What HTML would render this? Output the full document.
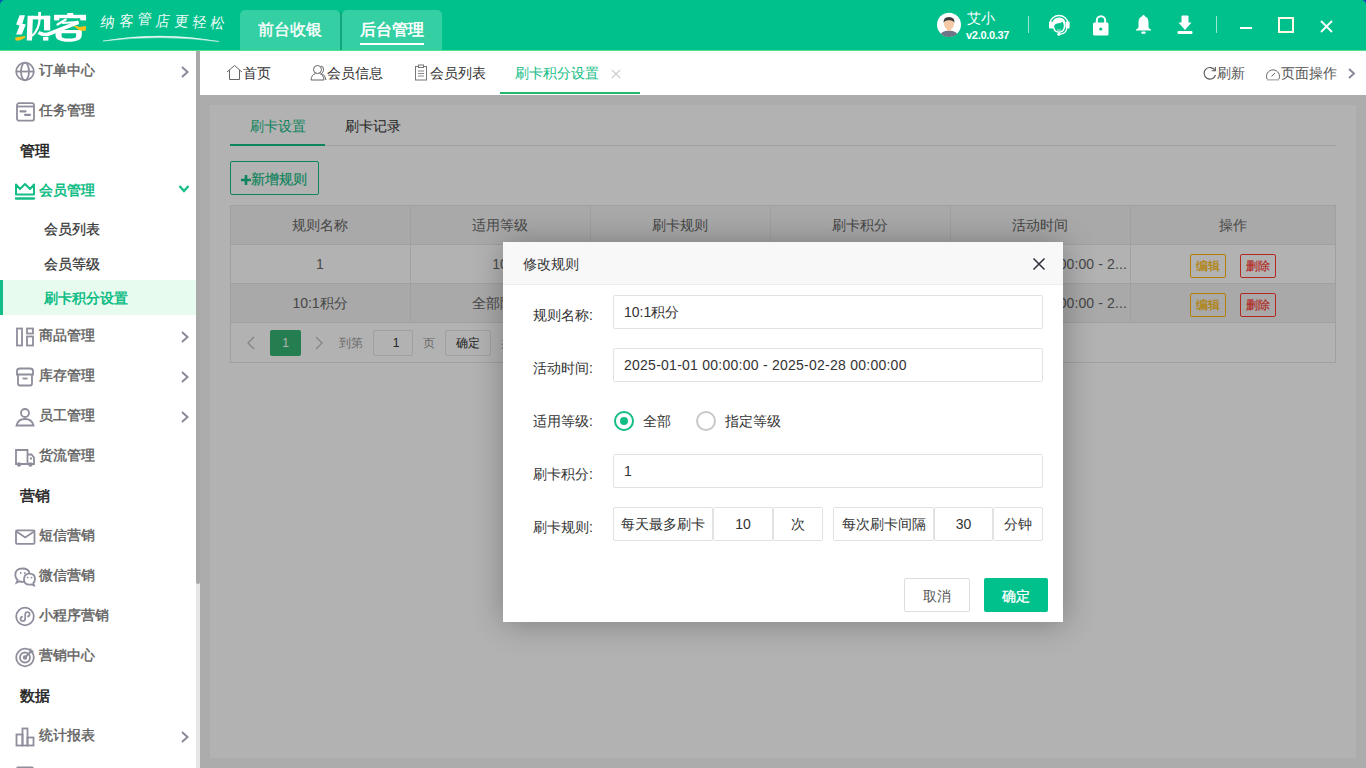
<!DOCTYPE html>
<html><head><meta charset="utf-8">
<style>
*{box-sizing:border-box;margin:0;padding:0}
html,body{width:1366px;height:768px;overflow:hidden;background:#fff;font-family:"Liberation Sans",sans-serif;font-size:14px;color:#333}
.abs{position:absolute}
#hdr{position:absolute;left:0;top:0;width:1366px;height:51px;background:#00c18c;border-radius:5px 5px 0 0;border-bottom:1px solid #4fe08a}
.htab{position:absolute;top:10px;height:40px;background:#34d0a3;border-radius:5px 5px 0 0;color:#fff;font-size:16px;line-height:40px;text-align:center}
#side{position:absolute;left:0;top:51px;width:196px;height:717px;background:#fff}
.si{position:absolute;left:0;width:196px;height:40px;line-height:20px}
.si .ic{position:absolute;left:15px;top:10px;width:20px;height:20px}
.si .tx{position:absolute;left:39px;top:10px;color:#555;font-weight:bold;font-size:14px}
.si .ch{position:absolute;left:178px;top:14px;width:12px;height:12px}
.grp{position:absolute;left:20px;color:#222;font-weight:bold;font-size:14px;line-height:20px}
.sub{position:absolute;left:44px;color:#333;font-size:14px;line-height:20px;font-weight:500}
#sbar{position:absolute;left:196px;top:51px;width:4px;height:717px;background:#e6e6e6}
#sthumb{position:absolute;left:196px;top:51px;width:4px;height:533px;background:#a9a9a9;border-radius:0 0 2px 2px}
#tabs{position:absolute;left:200px;top:51px;width:1166px;height:44px;background:#fff}
.tb{position:absolute;top:12px;line-height:20px;font-size:14px;color:#333}
#content{position:absolute;left:200px;top:95px;width:1166px;height:673px;background:#f7f7f7}
#panel{position:absolute;left:10px;top:10px;width:1146px;height:653px;background:#fff}
#mask{position:absolute;left:200px;top:95px;width:1166px;height:673px;background:rgba(0,0,0,.3)}
#dlg{position:absolute;left:503px;top:242px;width:560px;height:380px;background:#fff;box-shadow:1px 1px 30px rgba(0,0,0,.3)}
</style></head><body>
<div class="abs" style="left:0;top:0;width:6px;height:6px;background:#0b53b8"></div><div class="abs" style="left:1360px;top:0;width:6px;height:6px;background:#0b53b8"></div>
<div id="hdr">
  <svg class="abs" style="left:0;top:0" width="95" height="50" viewBox="0 0 95 50">
    <g fill="#fff">
      <polygon points="19.6,15.3 25,15.3 22.3,23.7 25.8,24.6 21.8,34.6 16.1,34.6 19.6,25.5 16.1,24.6"/>
      <polygon points="27.6,15.8 33,15.8 32,40.5 26.7,40.5"/>
      <rect x="32" y="15.8" width="18.2" height="3.6"/>
      <rect x="38.2" y="12" width="2.8" height="4"/>
      <rect x="44" y="15.8" width="6.2" height="14.6"/>
      <rect x="43.1" y="37" width="5.3" height="3.6"/>
      <rect x="54.1" y="14.8" width="31.9" height="3.4"/>
      <rect x="67.2" y="13" width="6.1" height="3"/>
      <rect x="54.1" y="15" width="5.2" height="5.4"/>
      <rect x="80.3" y="15" width="5.7" height="5.4"/>
      <path d="M55.5 30 H81.8 V35 Q81.8 41.8 68.6 41.8 Q55.5 41.8 55.5 35 Z M61.6 33.3 V36.5 Q61.6 38.5 68.8 38.5 Q76.1 38.5 76.1 36.5 V33.3 Z" fill-rule="evenodd"/>
    </g>
    <g fill="none" stroke="#fff">
      <path d="M39.6 19 Q39 30 32 36" stroke-width="2.3"/>
      <path d="M38.5 32.5 Q44 36 50 33.5 L78.5 22.3" stroke-width="3.6"/>
      <path d="M57.5 24.5 L65.8 19.5" stroke-width="2.2" stroke-linecap="round"/>
      <path d="M62 23 L78.5 22" stroke-width="2.2"/>
    </g>
    <path d="M15.2 37.6 L25 36 L25.4 37.4 Q22 39.5 19.6 40.6 L15.6 40.6 Z" fill="#f7c21a"/>
    <path d="M73.8 26.2 Q76 25 79 27 L86 26 L85.8 30.5 Q81 31.5 78 29.5 Z" fill="#f7c21a"/>
  </svg>
  <span class="abs" style="left:100.5px;top:15px;color:#fff;font-family:'Liberation Serif',serif;font-size:14px;line-height:16px;transform:skewX(-8deg) scaleY(1.05);opacity:.95">纳</span><span class="abs" style="left:119.5px;top:14px;color:#fff;font-family:'Liberation Serif',serif;font-size:14px;line-height:16px;transform:skewX(-8deg) scaleY(1.05);opacity:.95">客</span><span class="abs" style="left:138px;top:12px;color:#fff;font-family:'Liberation Serif',serif;font-size:14px;line-height:16px;transform:skewX(-8deg) scaleY(1.05);opacity:.95">管</span><span class="abs" style="left:156px;top:14px;color:#fff;font-family:'Liberation Serif',serif;font-size:14px;line-height:16px;transform:skewX(-8deg) scaleY(1.05);opacity:.95">店</span><span class="abs" style="left:175px;top:14px;color:#fff;font-family:'Liberation Serif',serif;font-size:14px;line-height:16px;transform:skewX(-8deg) scaleY(1.05);opacity:.95">更</span><span class="abs" style="left:192.5px;top:15px;color:#fff;font-family:'Liberation Serif',serif;font-size:14px;line-height:16px;transform:skewX(-8deg) scaleY(1.05);opacity:.95">轻</span><span class="abs" style="left:211px;top:16px;color:#fff;font-family:'Liberation Serif',serif;font-size:14px;line-height:16px;transform:skewX(-8deg) scaleY(1.05);opacity:.95">松</span><svg class="abs" style="left:0;top:0" width="235" height="50"><path d="M103 41 Q160 31 219 41.5 Q160 34 103 41 Z" fill="#fff" stroke="#fff" stroke-width=".5" opacity=".9"/></svg>
  <div class="htab" style="left:240px;width:100px;-webkit-text-stroke:.35px #fff">前台收银</div><div class="abs" style="left:340px;top:12px;width:2px;height:38px;background:#12a67d"></div>
  <div class="htab" style="left:342px;width:100px;font-weight:bold">后台管理<div class="abs" style="left:18px;top:33px;width:64px;height:2px;background:#fff"></div></div>
  <svg class="abs" style="left:936px;top:12px" width="26" height="26" viewBox="0 0 26 26">
    <circle cx="13" cy="12.8" r="12" fill="#fff"/>
    <clipPath id="avc"><circle cx="13" cy="13" r="12"/></clipPath>
    <g clip-path="url(#avc)">
      <path d="M3 26 Q4 19 13 18.5 Q22 19 23 26 Z" fill="#6f7486"/>
      <rect x="11" y="15" width="4" height="4" fill="#f3c6a4"/>
      <ellipse cx="13" cy="12" rx="5" ry="5.8" fill="#f5c9a6"/>
      <path d="M7.6 11 Q7 5 13 5 Q19 5 18.4 11 Q17 8 13 8.3 Q9 8 7.6 11Z" fill="#3a3a3a"/>
    </g>
  </svg>
  <div class="abs" style="left:967px;top:9px;color:#fff;font-size:14px;line-height:18px">艾小</div>
  <div class="abs" style="left:966px;top:28px;color:#fff;font-size:11px;line-height:14px;font-weight:bold;letter-spacing:-0.3px">v2.0.0.37</div>
  <div class="abs" style="left:1028px;top:16px;width:1px;height:17px;background:rgba(255,255,255,.6)"></div>
  <div class="abs" style="left:1216px;top:16px;width:1px;height:17px;background:rgba(255,255,255,.6)"></div>
  <svg class="abs" style="left:1047px;top:13px" width="24" height="24" viewBox="0 0 24 24">
    <path d="M2.8 10.5 A9.3 9.3 0 0 1 21.2 10.5" stroke="#fff" stroke-width="1.4" fill="none"/>
    <rect x="2" y="8.5" width="4.2" height="7" rx="1" fill="#fff"/>
    <rect x="18.6" y="8.5" width="4" height="7" rx="1" fill="#fff"/>
    <path d="M5.5 11.5 Q5.5 4.5 12 4.5 Q18.5 4.5 18.5 11.5 Q18.5 19.5 12 20 Q5.5 19.5 5.5 11.5Z" fill="#fff"/>
    <path d="M7.2 13 Q8 10.2 12 10.3 Q14.5 10 15.2 8.5 Q16.8 10 16.8 12.5 Q16.8 18.2 12 18.6 Q7.2 18.2 7.2 13Z" fill="#00c18c"/>
    <path d="M10 16.8 Q12 17.6 14 16.8" stroke="#fff" stroke-width=".9" fill="none" opacity=".8"/>
    <path d="M19.8 15 Q19.5 20.5 12.5 21.3" stroke="#fff" stroke-width="1.3" fill="none"/>
    <circle cx="11.8" cy="21.3" r="1.5" fill="#fff"/>
  </svg>
  <svg class="abs" style="left:1093px;top:15px" width="16" height="21" viewBox="0 0 16 21">
    <path d="M3.8 8 V5.5 A4.2 4.2 0 0 1 12.2 5.5 V8" stroke="#fff" stroke-width="2" fill="none"/>
    <rect x="0" y="7.5" width="15.5" height="13" rx="1.5" fill="#fff"/>
    <circle cx="7.75" cy="14" r="1.6" fill="#00c18c"/>
  </svg>
  <svg class="abs" style="left:1135px;top:14px" width="17" height="21" viewBox="0 0 17 21">
    <path d="M8.5 1 Q9.5 1 9.8 2.2 Q13.5 3.5 13.5 8.5 V13 Q13.5 14.5 16 15.5 V16.6 H1 V15.5 Q3.5 14.5 3.5 13 V8.5 Q3.5 3.5 7.2 2.2 Q7.5 1 8.5 1Z" fill="#fff"/>
    <rect x="6.3" y="17.4" width="4.4" height="2.4" rx="1" fill="#fff"/>
  </svg>
  <svg class="abs" style="left:1177px;top:15px" width="16" height="20" viewBox="0 0 16 20">
    <path d="M4.5 1.5 Q4.5 0.5 5.5 0.5 H10.5 Q11.5 0.5 11.5 1.5 V7.5 H14.5 L8 15 L1.5 7.5 H4.5Z" fill="#fff"/>
    <rect x="0.5" y="16" width="15" height="3" rx="1.3" fill="#fff"/>
  </svg>
  <div class="abs" style="left:1240px;top:27px;width:12px;height:2px;background:#fff"></div>
  <div class="abs" style="left:1278px;top:17px;width:16px;height:16px;border:2px solid #fffbe6"></div>
  <svg class="abs" style="left:1320px;top:20px" width="13" height="13" viewBox="0 0 13 13"><path d="M1 1 L12 12 M12 1 L1 12" stroke="#fff" stroke-width="1.8"/></svg>
</div>
<div id="side"></div>
<div class="abs" style="left:39px;top:60px;line-height:20px;color:#606060;-webkit-text-stroke:0.4px #606060">订单中心</div><svg class="abs" style="left:13px;top:60px" width="24" height="24" viewBox="0 0 24 24" fill="none" stroke="#8e8e9c" stroke-width="1.8"><circle cx="12" cy="11.5" r="8.8"/><ellipse cx="12" cy="11.5" rx="4" ry="8.8"/><path d="M3.2 11.5 H20.8"/></svg><svg class="abs" style="left:180px;top:66px" width="10" height="12" viewBox="0 0 10 12"><path d="M2 1 L7.5 6 L2 11" stroke="#8a8a9a" stroke-width="2" fill="none"/></svg><div class="abs" style="left:39px;top:100px;line-height:20px;color:#606060;-webkit-text-stroke:0.4px #606060">任务管理</div><svg class="abs" style="left:13px;top:100px" width="24" height="24" viewBox="0 0 24 24" fill="none" stroke="#8e8e9c" stroke-width="1.8"><rect x="4" y="3.2" width="17" height="17.5" rx="2"/><path d="M4 6.5 H21"/><path d="M7.5 11.3 H12.5" stroke-width="2.2" stroke-linecap="round"/><path d="M12 14.8 H17" stroke-width="2.2" stroke-linecap="round"/></svg><div style="position:absolute;left:20px;color:#222;font-size:15px;line-height:20px;-webkit-text-stroke:0.5px #222;top:141px">管理</div><div class="abs" style="left:39px;top:180px;line-height:20px;color:#12bd86;font-weight:bold">会员管理</div><svg class="abs" style="left:13px;top:178px" width="24" height="24" viewBox="0 0 24 24" fill="none" stroke="#12bd86" stroke-width="2"><path d="M3 6.5 L7 11 L12 6 L17 11 L21 6.5 V16.5 H3 Z" stroke-linejoin="round"/><path d="M3 20.5 H21" stroke-width="2.4" stroke-linecap="round"/></svg><svg class="abs" style="left:178px;top:184px" width="12" height="10" viewBox="0 0 12 10"><path d="M1.5 2 L6 7 L10.5 2" stroke="#12bd86" stroke-width="2.2" fill="none"/></svg><div style="position:absolute;left:44px;color:#333;font-size:14px;line-height:20px;-webkit-text-stroke:0.25px #333;top:219px">会员列表</div><div style="position:absolute;left:44px;color:#333;font-size:14px;line-height:20px;-webkit-text-stroke:0.25px #333;top:254px">会员等级</div><div class="abs" style="left:0;top:280px;width:196px;height:35px;background:#e7fcee"></div><div class="abs" style="left:0;top:280px;width:3px;height:35px;background:#12bd86"></div><div class="abs" style="left:44px;top:288px;line-height:20px;color:#12bd86;font-weight:bold">刷卡积分设置</div><div class="abs" style="left:39px;top:325px;line-height:20px;color:#606060;-webkit-text-stroke:0.4px #606060">商品管理</div><svg class="abs" style="left:13px;top:325px" width="24" height="24" viewBox="0 0 24 24" fill="none" stroke="#8e8e9c" stroke-width="1.8"><rect x="4" y="3.5" width="5" height="17"/><rect x="14" y="3.5" width="6" height="5"/><rect x="14" y="11.5" width="6" height="9"/></svg><svg class="abs" style="left:180px;top:331px" width="10" height="12" viewBox="0 0 10 12"><path d="M2 1 L7.5 6 L2 11" stroke="#8a8a9a" stroke-width="2" fill="none"/></svg><div class="abs" style="left:39px;top:365px;line-height:20px;color:#606060;-webkit-text-stroke:0.4px #606060">库存管理</div><svg class="abs" style="left:13px;top:365px" width="24" height="24" viewBox="0 0 24 24" fill="none" stroke="#8e8e9c" stroke-width="1.8"><path d="M4 9.5 V6 Q4 3.5 7 3.5 H17 Q20 3.5 20 6 V9.5 Z"/><path d="M5 9.5 V18.5 Q5 20.5 7 20.5 H17 Q19 20.5 19 18.5 V9.5"/><path d="M9.5 13.5 H14.5"/></svg><svg class="abs" style="left:180px;top:371px" width="10" height="12" viewBox="0 0 10 12"><path d="M2 1 L7.5 6 L2 11" stroke="#8a8a9a" stroke-width="2" fill="none"/></svg><div class="abs" style="left:39px;top:405px;line-height:20px;color:#606060;-webkit-text-stroke:0.4px #606060">员工管理</div><svg class="abs" style="left:13px;top:405px" width="24" height="24" viewBox="0 0 24 24" fill="none" stroke="#8e8e9c" stroke-width="1.8"><circle cx="12" cy="8" r="4"/><path d="M3.5 20.5 Q5 14 12 14 Q19 14 20.5 20.5 Z"/></svg><svg class="abs" style="left:180px;top:411px" width="10" height="12" viewBox="0 0 10 12"><path d="M2 1 L7.5 6 L2 11" stroke="#8a8a9a" stroke-width="2" fill="none"/></svg><div class="abs" style="left:39px;top:445px;line-height:20px;color:#606060;-webkit-text-stroke:0.4px #606060">货流管理</div><svg class="abs" style="left:13px;top:445px" width="24" height="24" viewBox="0 0 24 24" fill="none" stroke="#8e8e9c" stroke-width="1.8"><path d="M3 5 H14.5 V19 H3 Z"/><path d="M14.5 9.5 H18.5 L21 12.5 V19 H14.5"/><circle cx="6" cy="19.5" r="1.3" fill="#8e8e9c"/><circle cx="17.5" cy="19.5" r="1.3" fill="#8e8e9c"/><path d="M17 13.5 H19"/></svg><div style="position:absolute;left:20px;color:#222;font-size:15px;line-height:20px;-webkit-text-stroke:0.5px #222;top:486px">营销</div><div class="abs" style="left:39px;top:525px;line-height:20px;color:#606060;-webkit-text-stroke:0.4px #606060">短信营销</div><svg class="abs" style="left:13px;top:525px" width="24" height="24" viewBox="0 0 24 24" fill="none" stroke="#8e8e9c" stroke-width="1.8"><rect x="3" y="5.3" width="18.5" height="13.5" rx="1"/><path d="M3.5 6.5 L12.2 12.5 L21 6.5"/></svg><div class="abs" style="left:39px;top:565px;line-height:20px;color:#606060;-webkit-text-stroke:0.4px #606060">微信营销</div><svg class="abs" style="left:13px;top:565px" width="24" height="24" viewBox="0 0 24 24" fill="none" stroke="#8e8e9c" stroke-width="1.8"><path d="M12.5 16.3 Q11 16.8 9.5 16.8 Q8 16.8 6.8 16.3 L3.5 17.8 L4.6 15 Q2.3 13 2.3 10.2 Q2.3 3.5 9.5 3.5 Q15.8 3.5 16.6 8.5"/><path d="M16.5 8.6 Q22 8.6 22 14 Q22 16.5 20.3 18 L21 20.5 L18.3 19.4 Q17.5 19.7 16.5 19.7 Q11 19.7 11 14.2 Q11 8.6 16.5 8.6Z" fill="#fff"/><circle cx="7.7" cy="8" r=".9" fill="#8e8e9c" stroke="none"/><circle cx="11.8" cy="8" r=".9" fill="#8e8e9c" stroke="none"/><circle cx="14.6" cy="12.6" r=".9" fill="#8e8e9c" stroke="none"/><circle cx="18.5" cy="12.6" r=".9" fill="#8e8e9c" stroke="none"/></svg><div class="abs" style="left:39px;top:605px;line-height:20px;color:#606060;-webkit-text-stroke:0.4px #606060">小程序营销</div><svg class="abs" style="left:13px;top:605px" width="24" height="24" viewBox="0 0 24 24" fill="none" stroke="#8e8e9c" stroke-width="1.8"><circle cx="12" cy="11.5" r="8.8"/><path d="M14.3 11.6 Q16.6 11.3 16.6 9.2 Q16.6 7 14.4 7 Q12.2 7 12.2 9.5 V13.5 Q12.2 16 9.9 16 Q7.6 16 7.6 13.9 Q7.6 12 9.7 11.7" stroke-width="1.7"/></svg><div class="abs" style="left:39px;top:645px;line-height:20px;color:#606060;-webkit-text-stroke:0.4px #606060">营销中心</div><svg class="abs" style="left:13px;top:645px" width="24" height="24" viewBox="0 0 24 24" fill="none" stroke="#8e8e9c" stroke-width="1.8"><circle cx="12" cy="12.5" r="8.8"/><circle cx="12" cy="12.5" r="5"/><circle cx="12" cy="12.5" r="1.3" fill="#8e8e9c"/><path d="M12 12.5 L19 5.5"/><path d="M17.5 3.5 V6.5 H20.5" /></svg><div style="position:absolute;left:20px;color:#222;font-size:15px;line-height:20px;-webkit-text-stroke:0.5px #222;top:686px">数据</div><div class="abs" style="left:39px;top:725px;line-height:20px;color:#606060;-webkit-text-stroke:0.4px #606060">统计报表</div><svg class="abs" style="left:13px;top:725px" width="24" height="24" viewBox="0 0 24 24" fill="none" stroke="#8e8e9c" stroke-width="1.8"><rect x="9.5" y="3.5" width="5" height="17"/><rect x="3.5" y="9.5" width="6" height="11"/><rect x="14.5" y="12.5" width="6" height="8"/></svg><svg class="abs" style="left:180px;top:731px" width="10" height="12" viewBox="0 0 10 12"><path d="M2 1 L7.5 6 L2 11" stroke="#8a8a9a" stroke-width="2" fill="none"/></svg><svg class="abs" style="left:13px;top:764px" width="24" height="24" viewBox="0 0 24 24" fill="none" stroke="#8e8e9c" stroke-width="1.8"><rect x="4" y="3.5" width="16" height="17" rx="1"/></svg>
<div id="sbar"></div><div id="sthumb"></div>
<div id="tabs">
  <svg class="abs" style="left:26px;top:13px" width="17" height="17" viewBox="0 0 17 17" fill="none" stroke="#666" stroke-width="1"><path d="M1 8 L8.5 1.5 L16 8"/><path d="M3.5 6 V15.5 H13.5 V6"/></svg>
  <div class="tb" style="left:43px">首页</div>
  <svg class="abs" style="left:110px;top:13px" width="17" height="17" viewBox="0 0 17 17" fill="none" stroke="#666" stroke-width="1"><circle cx="7.5" cy="5.5" r="4"/><path d="M1 16 Q1.5 10.5 5.5 9.5 M9.5 9.5 Q13.5 10.5 14 16 H1"/><path d="M11 1.8 Q14 2.5 13.5 6.5 Q13 8.5 11.5 9.5 Q15.5 11 16 16"/></svg>
  <div class="tb" style="left:127px">会员信息</div>
  <svg class="abs" style="left:214px;top:13px" width="14" height="17" viewBox="0 0 14 17" fill="none" stroke="#777" stroke-width="1"><rect x="1.5" y="2.5" width="11" height="13.5"/><rect x="4.5" y="1" width="5" height="2.5" fill="#fff"/><path d="M4 7 H10 M4 9.5 H10 M4 12 H10" stroke-width=".9"/></svg>
  <div class="tb" style="left:230px">会员列表</div>
  <div class="tb" style="left:315px;color:#12bd86">刷卡积分设置</div>
  <svg class="abs" style="left:411px;top:18px" width="10" height="10" viewBox="0 0 10 10"><path d="M.8 .8 L9.2 9.2 M9.2 .8 L.8 9.2" stroke="#c8c8c8" stroke-width="1.2"/></svg>
  <div class="abs" style="left:300px;top:41px;width:140px;height:2px;background:#22b86d"></div>
  <svg class="abs" style="left:1003px;top:15px" width="14" height="14" viewBox="0 0 14 14" fill="none" stroke="#555" stroke-width="1.1"><path d="M12 4.5 A5.8 5.8 0 1 0 12.5 9"/><path d="M12.3 1 V4.8 H8.7"/></svg>
  <div class="tb" style="left:1017px;color:#555">刷新</div>
  <svg class="abs" style="left:1065px;top:16px" width="16" height="14" viewBox="0 0 16 14" fill="none" stroke="#666" stroke-width="1"><path d="M2.3 12.5 A6.5 6.5 0 1 1 13.7 12.5"/><path d="M6.5 9.5 L10 6"/><path d="M2 12.8 H14" stroke="#bbb" stroke-width="1.6"/></svg>
  <div class="tb" style="left:1081px;color:#555">页面操作</div>
  <svg class="abs" style="left:1147px;top:17px" width="10" height="12" viewBox="0 0 10 12"><path d="M2 1 L7 5.5 L2 10" stroke="#8a8a9a" stroke-width="2" fill="none"/></svg>
</div>
<div id="content"><div id="panel"><div class="abs" style="left:40px;top:11px;line-height:20px;color:#12bd86">刷卡设置</div><div class="abs" style="left:135px;top:11px;line-height:20px;color:#333">刷卡记录</div><div class="abs" style="left:20px;top:40px;width:1106px;height:1px;background:#e6e6e6"></div><div class="abs" style="left:20px;top:39px;width:95px;height:2px;background:#12bd86"></div><div class="abs" style="left:20px;top:56px;width:89px;height:34px;border:1px solid #12bd86;border-radius:2px;color:#12bd86;line-height:32px;padding-left:10px"><svg style="position:absolute;left:9px;top:12px" width="12" height="12" viewBox="0 0 12 12"><path d="M6 1 V11 M1 6 H11" stroke="#12bd86" stroke-width="2.6"/></svg><span style="position:absolute;left:20px;top:1px;-webkit-text-stroke:.2px #12bd86">新增规则</span></div><div class="abs" style="left:20px;top:100px;width:1106px;height:158px;border:1px solid #e6e6e6"></div><div class="abs" style="left:21px;top:101px;width:1104px;height:38px;background:#f2f2f2"></div><div class="abs" style="left:21px;top:178px;width:1104px;height:39px;background:#f2f2f2"></div><div class="abs" style="left:21px;top:139px;width:1104px;height:1px;background:#e6e6e6"></div><div class="abs" style="left:21px;top:178px;width:1104px;height:1px;background:#e6e6e6"></div><div class="abs" style="left:21px;top:217px;width:1104px;height:1px;background:#e6e6e6"></div><div class="abs" style="left:200px;top:101px;width:1px;height:116px;background:#e6e6e6"></div><div class="abs" style="left:380px;top:101px;width:1px;height:116px;background:#e6e6e6"></div><div class="abs" style="left:560px;top:101px;width:1px;height:116px;background:#e6e6e6"></div><div class="abs" style="left:740px;top:101px;width:1px;height:116px;background:#e6e6e6"></div><div class="abs" style="left:920px;top:101px;width:1px;height:116px;background:#e6e6e6"></div><div class="abs" style="left:20px;top:110px;width:180px;text-align:center;line-height:20px;color:#666">规则名称</div><div class="abs" style="left:200px;top:110px;width:180px;text-align:center;line-height:20px;color:#666">适用等级</div><div class="abs" style="left:380px;top:110px;width:180px;text-align:center;line-height:20px;color:#666">刷卡规则</div><div class="abs" style="left:560px;top:110px;width:180px;text-align:center;line-height:20px;color:#666">刷卡积分</div><div class="abs" style="left:740px;top:110px;width:180px;text-align:center;line-height:20px;color:#666">活动时间</div><div class="abs" style="left:920px;top:110px;width:206px;text-align:center;line-height:20px;color:#666">操作</div><div class="abs" style="left:20px;top:149px;width:180px;text-align:center;line-height:20px;color:#666">1</div><div class="abs" style="left:200px;top:149px;width:180px;text-align:center;line-height:20px;color:#666">10</div><div class="abs" style="left:20px;top:188px;width:180px;text-align:center;line-height:20px;color:#666">10:1积分</div><div class="abs" style="left:200px;top:188px;width:180px;text-align:center;line-height:20px;color:#666">全部除外</div><div class="abs" style="left:752px;top:149px;width:170px;line-height:20px;color:#666"><span style="letter-spacing:.12px">2025-01-01 00:00:00 - 2...</span></div><div class="abs" style="left:752px;top:188px;width:170px;line-height:20px;color:#666"><span style="letter-spacing:.12px">2025-01-01 00:00:00 - 2...</span></div><div class="abs" style="left:980px;top:149px;width:36px;height:24px;border:1px solid #ffb800;border-radius:2px;color:#ffb800;font-size:12px;line-height:22px;text-align:center;-webkit-text-stroke:.2px #ffb800">编辑</div><div class="abs" style="left:1030px;top:149px;width:36px;height:24px;border:1px solid #ff3b30;border-radius:2px;color:#ff3b30;font-size:12px;line-height:22px;text-align:center;-webkit-text-stroke:.2px #ff3b30">删除</div><div class="abs" style="left:980px;top:188px;width:36px;height:24px;border:1px solid #ffb800;border-radius:2px;color:#ffb800;font-size:12px;line-height:22px;text-align:center;-webkit-text-stroke:.2px #ffb800">编辑</div><div class="abs" style="left:1030px;top:188px;width:36px;height:24px;border:1px solid #ff3b30;border-radius:2px;color:#ff3b30;font-size:12px;line-height:22px;text-align:center;-webkit-text-stroke:.2px #ff3b30">删除</div><svg class="abs" style="left:36px;top:231px" width="10" height="14" viewBox="0 0 10 14"><path d="M8 1 L2 7 L8 13" stroke="#bbb" stroke-width="1.2" fill="none"/></svg><div class="abs" style="left:60px;top:225px;width:31px;height:26px;background:#36b571;border-radius:2px;color:#fff;font-size:12px;line-height:26px;text-align:center">1</div><svg class="abs" style="left:104px;top:231px" width="10" height="14" viewBox="0 0 10 14"><path d="M2 1 L8 7 L2 13" stroke="#bbb" stroke-width="1.2" fill="none"/></svg><div class="abs" style="left:129px;top:228px;line-height:20px;font-size:12px;color:#999">到第</div><div class="abs" style="left:163px;top:225px;width:40px;height:26px;border:1px solid #e6e6e6;border-radius:2px;font-size:12px;line-height:24px;text-align:center;color:#333;padding-left:6px">1</div><div class="abs" style="left:213px;top:228px;line-height:20px;font-size:12px;color:#999">页</div><div class="abs" style="left:235px;top:225px;width:46px;height:26px;border:1px solid #e6e6e6;border-radius:2px;font-size:12px;line-height:24px;text-align:center;color:#333">确定</div><div class="abs" style="left:291px;top:228px;line-height:20px;font-size:12px;color:#999">共 2 条</div></div></div>
<div id="mask"></div>
<div id="dlg"><div class="abs" style="left:0;top:0;width:560px;height:43px;background:#f8f8f8;border-bottom:1px solid #eee"></div><div class="abs" style="left:20px;top:12px;line-height:20px;color:#333">修改规则</div><svg class="abs" style="left:529px;top:15px" width="14" height="14" viewBox="0 0 14 14"><path d="M1.5 1.5 L12.5 12.5 M12.5 1.5 L1.5 12.5" stroke="#2f2f3a" stroke-width="1.5"/></svg><div class="abs" style="left:30px;top:63px;line-height:20px;color:#333">规则名称:</div><div class="abs" style="left:110px;top:53px;width:430px;height:34px;border:1px solid #e2e2e2;border-radius:2px;padding-left:10px;line-height:32px;color:#333">10:1积分</div><div class="abs" style="left:30px;top:116px;line-height:20px;color:#333">活动时间:</div><div class="abs" style="left:110px;top:106px;width:430px;height:34px;border:1px solid #e2e2e2;border-radius:2px;padding-left:10px;line-height:32px;color:#333"><span style="letter-spacing:.25px">2025-01-01 00:00:00 - 2025-02-28 00:00:00</span></div><div class="abs" style="left:30px;top:169px;line-height:20px;color:#333">适用等级:</div><div class="abs" style="left:111px;top:169px;width:20px;height:20px;border:2px solid #12bd86;border-radius:50%"></div><div class="abs" style="left:117px;top:175px;width:8px;height:8px;background:#12bd86;border-radius:50%"></div><div class="abs" style="left:140px;top:169px;line-height:20px;color:#333">全部</div><div class="abs" style="left:193px;top:169px;width:20px;height:20px;border:2px solid #c8c8c8;border-radius:50%"></div><div class="abs" style="left:222px;top:169px;line-height:20px;color:#333">指定等级</div><div class="abs" style="left:30px;top:222px;line-height:20px;color:#333">刷卡积分:</div><div class="abs" style="left:110px;top:212px;width:430px;height:34px;border:1px solid #e2e2e2;border-radius:2px;padding-left:10px;line-height:32px;color:#333">1</div><div class="abs" style="left:30px;top:275px;line-height:20px;color:#333">刷卡规则:</div><div class="abs" style="left:110px;top:265px;width:100px;height:34px;border:1px solid #e2e2e2;border-radius:2px;line-height:32px;text-align:center;color:#333">每天最多刷卡</div><div class="abs" style="left:210px;top:265px;width:60px;height:34px;border:1px solid #e2e2e2;border-radius:2px;line-height:32px;text-align:center;color:#333">10</div><div class="abs" style="left:270px;top:265px;width:50px;height:34px;border:1px solid #e2e2e2;border-radius:2px;line-height:32px;text-align:center;color:#333">次</div><div class="abs" style="left:330px;top:265px;width:101px;height:34px;border:1px solid #e2e2e2;border-radius:2px;line-height:32px;text-align:center;color:#333">每次刷卡间隔</div><div class="abs" style="left:431px;top:265px;width:59px;height:34px;border:1px solid #e2e2e2;border-radius:2px;line-height:32px;text-align:center;color:#333">30</div><div class="abs" style="left:490px;top:265px;width:50px;height:34px;border:1px solid #e2e2e2;border-radius:2px;line-height:32px;text-align:center;color:#333">分钟</div><div class="abs" style="left:401px;top:336px;width:66px;height:34px;border:1px solid #ddd;border-radius:2px;line-height:35px;text-align:center;color:#555">取消</div><div class="abs" style="left:481px;top:336px;width:64px;height:34px;background:#00c18c;border-radius:2px;line-height:36px;text-align:center;color:#fff;-webkit-text-stroke:.3px #fff">确定</div></div>
</body></html>
